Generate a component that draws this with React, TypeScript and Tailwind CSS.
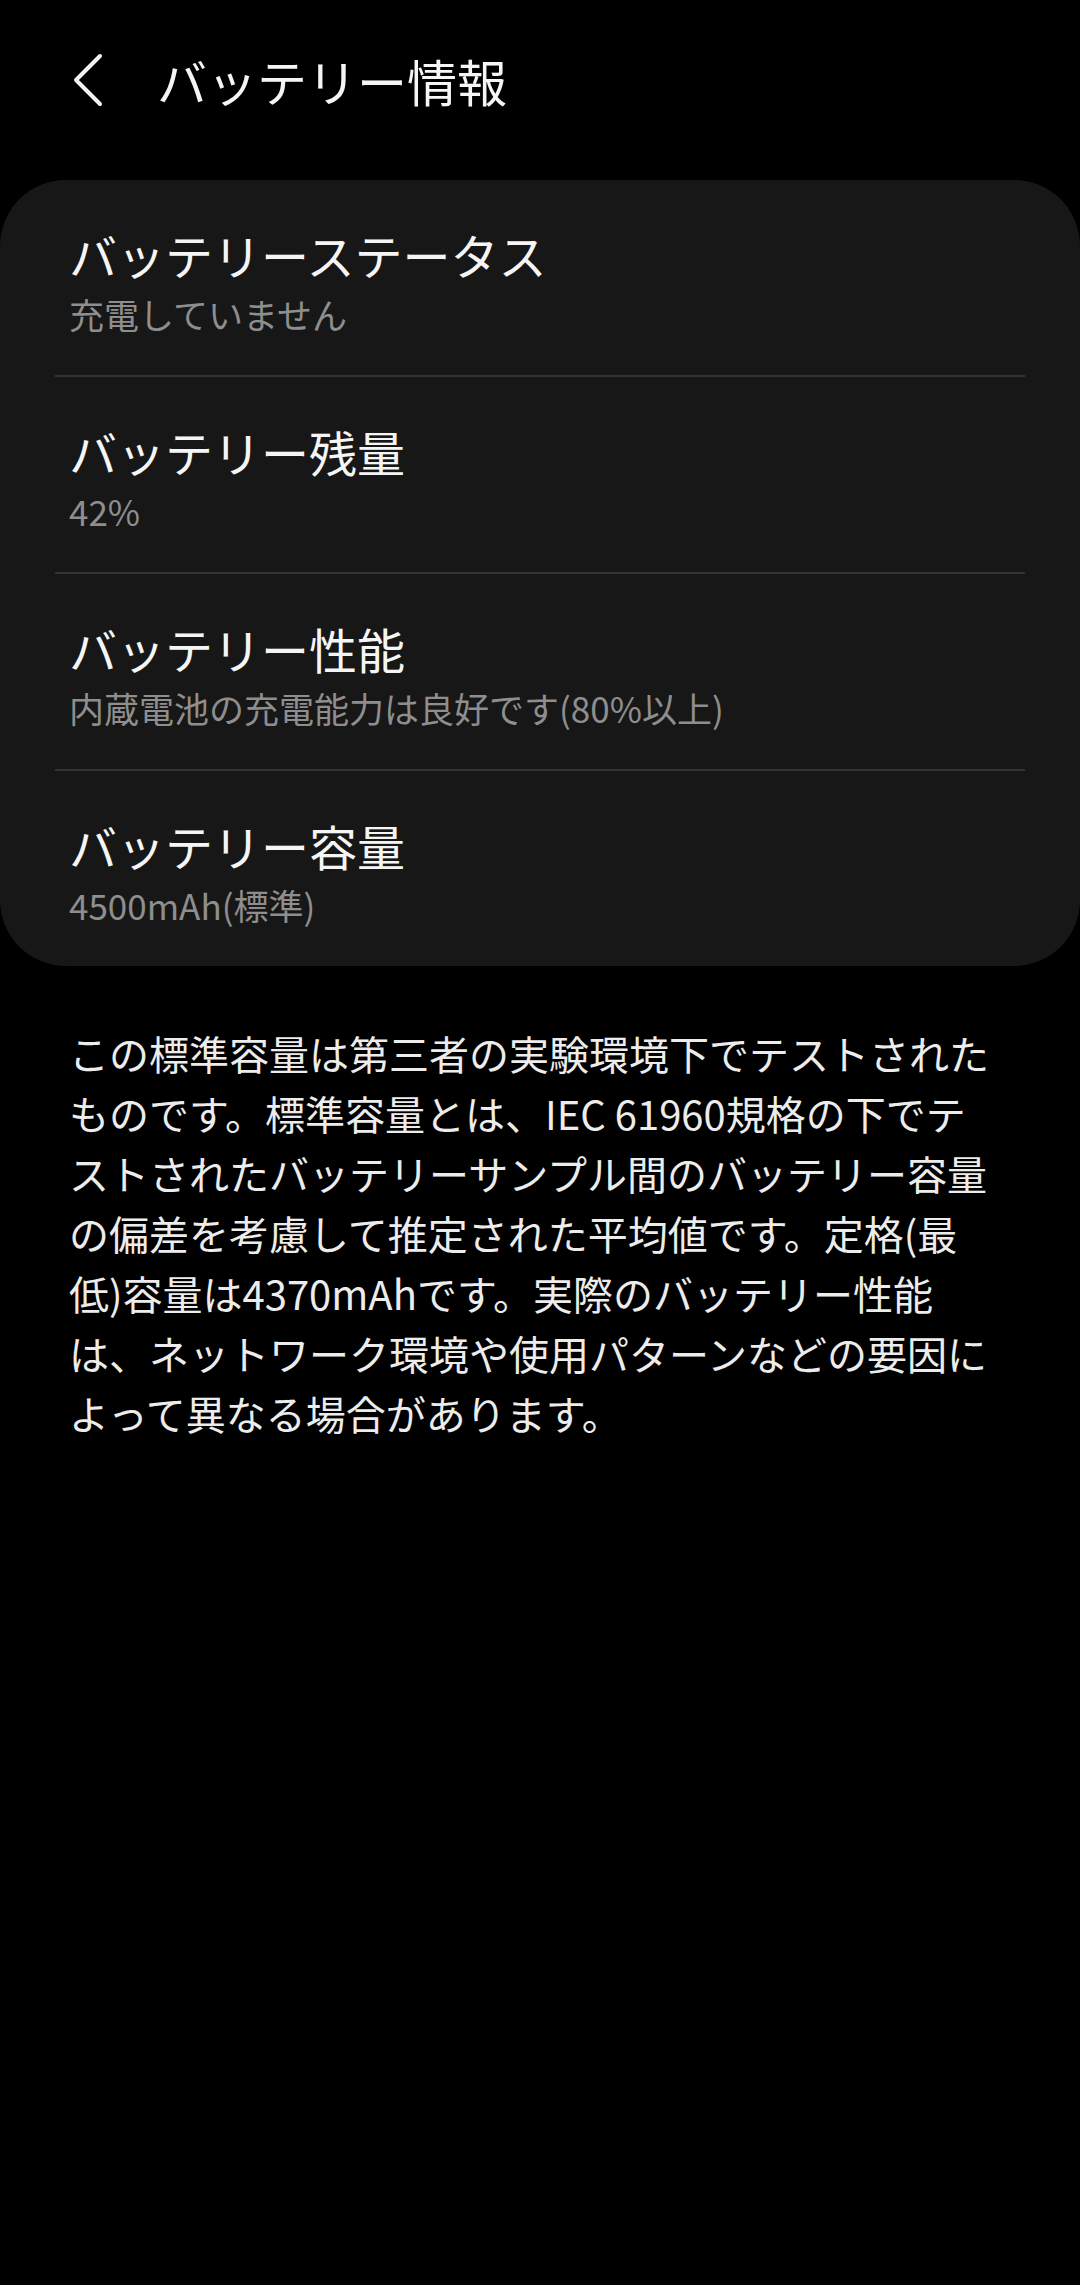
import React from 'react';

interface Item {
  title: string;
  value: string;
}

const items: Item[] = [
  { title: 'バッテリーステータス', value: '充電していません' },
  { title: 'バッテリー残量', value: '42%' },
  { title: 'バッテリー性能', value: '内蔵電池の充電能力は良好です(80%以上)' },
  { title: 'バッテリー容量', value: '4500mAh(標準)' },
];

const lines = [
  'この標準容量は第三者の実験環境下でテストされた',
  'ものです。標準容量とは、IEC 61960規格の下でテ',
  'ストされたバッテリーサンプル間のバッテリー容量',
  'の偏差を考慮して推定された平均値です。定格(最',
  '低)容量は4370mAhです。実際のバッテリー性能',
  'は、ネットワーク環境や使用パターンなどの要因に',
  'よって異なる場合があります。',
];

const BackIcon = () => (
  <svg width="32" height="54" viewBox="0 0 32 54" fill="none">
    <polyline
      points="28,3 4,27 28,51"
      stroke="#f2f2f2"
      strokeWidth="4"
      strokeLinecap="round"
      strokeLinejoin="round"
    />
  </svg>
);

const InfoRow: React.FC<{ item: Item }> = ({ item }) => (
  <div className="pl-[69px] pr-[56px] pt-[45px] pb-[39px]">
    <div className="text-[48px] leading-[58px] text-[#f5f5f5] whitespace-nowrap">{item.title}</div>
    <div className="mt-[9px] text-[35px] leading-[44px] text-[#8e8e8e] whitespace-nowrap">{item.value}</div>
  </div>
);

export default function App() {
  return (
    <div className="min-h-[2285px] w-[1080px] bg-black font-['Noto_Sans_CJK_JP','Noto_Sans',sans-serif]">
      {/* Header */}
      <div className="flex items-center h-[160px] pl-[72px]">
        <button className="flex items-center justify-center w-[32px] h-[54px]">
          <BackIcon />
        </button>
        <h1 className="ml-[53px] text-[50px] leading-none font-normal text-[#f5f5f5] whitespace-nowrap">
          バッテリー情報
        </h1>
      </div>

      {/* Info card */}
      <div className="mt-[20px] bg-[#171717] rounded-[66px] overflow-hidden">
        {items.map((item, i) => (
          <div key={item.title}>
            {i > 0 && <div className="mx-[55px] h-[2px] bg-[#333333]" />}
            <InfoRow item={item} />
          </div>
        ))}
      </div>

      {/* Note */}
      <p className="mt-[57px] px-[69px] text-[40px] leading-[60px] text-[#ececec] whitespace-nowrap">
        {lines.map((line, i) => (
          <React.Fragment key={i}>
            {line}
            {i < lines.length - 1 && <br />}
          </React.Fragment>
        ))}
      </p>
    </div>
  );
}
